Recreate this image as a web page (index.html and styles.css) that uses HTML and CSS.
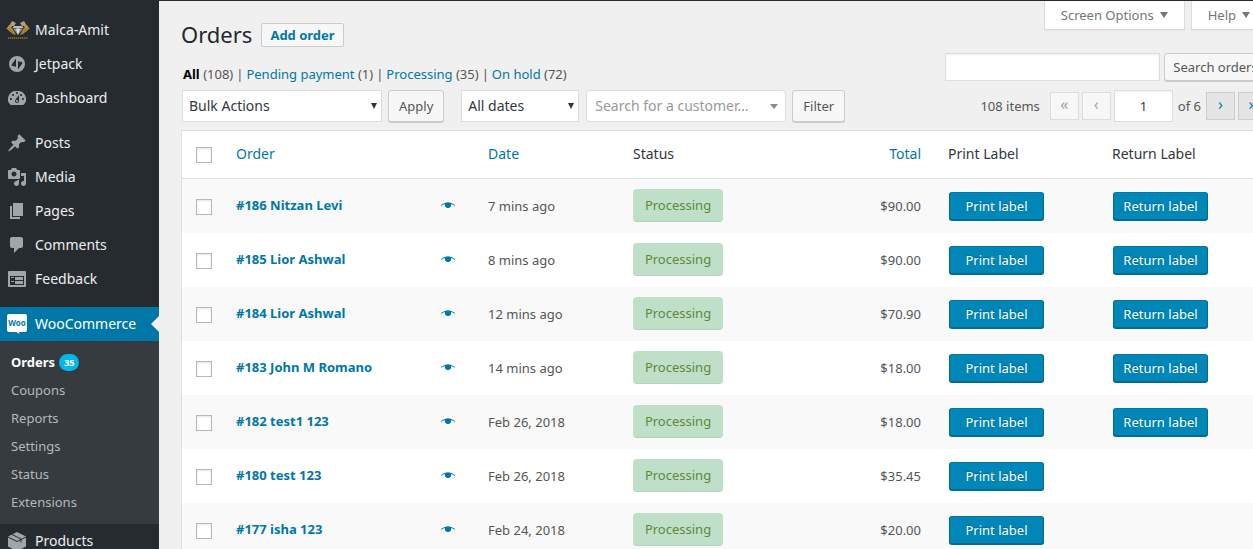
FILE: index.html
```html
<!DOCTYPE html>
<html lang="en">
<head>
<meta charset="utf-8">
<title>Orders</title>
<link rel="stylesheet" href="styles.css">
</head>
<body>
<div class="layout">
  <nav class="sidebar" aria-label="Main menu">
    <a class="item" href="#"><svg class="brand" viewBox="0 0 24 20" aria-hidden="true">
      <path fill="#aaa184" d="M6 1l4 2-2 3H3zM18 1l-4 2 2 3h5z"/><path fill="#b5953f" d="M3 5h4L5 8H1zM17 5h4l2 3h-4z"/><path fill="#a8842b" d="M0 8h6l2 3H3zM18 8h6l-3 3h-5zM3 11h5l2 4-3-1zM16 11h5l-4 3-3 1z"/>
      <path fill="#b9bdbf" d="M8 6h8l1.500 2h-11z"/><path fill="#8d9397" d="M7 8.500h10L12 15z"/><path fill="#dcdedf" d="M10 8.500h4L12 15z"/>
      <path stroke="#8b6d20" stroke-width="1.500" stroke-dasharray="1.500 .5" d="M2 18h20"/></svg>Malca-Amit</a>
    <a class="item" href="#"><svg viewBox="0 0 20 20" aria-hidden="true"><path fill-rule="evenodd" d="M10 2a8 8 0 1 1 0 16 8 8 0 0 1 0-16zM9 4.500L4.700 10.500q-.6 1.200.8 1.500L9 12.700zM11 7.300v8.200l4.300-6q.6-1.200-.8-1.500z"/></svg>Jetpack</a>
    <a class="item" href="#"><svg viewBox="0 0 20 20" aria-hidden="true"><path fill-rule="evenodd" d="M3.760 17h12.480A7.998 7.998 0 0 0 10 3a8 8 0 0 0-6.240 14zM10 4c.55 0 1 .45 1 1s-.45 1-1 1-1-.45-1-1 .45-1 1-1zM6 6c.55 0 1 .45 1 1s-.45 1-1 1-1-.45-1-1 .45-1 1-1zm8 0c.55 0 1 .45 1 1s-.45 1-1 1-1-.45-1-1 .45-1 1-1zm-5.370 5.550L12 7v6c0 1.100-.9 2-2 2s-2-.9-2-2c0-.57.24-1.080.63-1.450zM4 10c.55 0 1 .45 1 1s-.45 1-1 1-1-.45-1-1 .45-1 1-1zm12 0c.55 0 1 .45 1 1s-.45 1-1 1-1-.45-1-1 .45-1 1-1zm-5 3c0-.55-.45-1-1-1s-1 .45-1 1 .45 1 1 1 1-.45 1-1z"/></svg>Dashboard</a>
    <a class="item first" href="#"><svg viewBox="0 0 20 20" aria-hidden="true"><path d="M10.440 3.020l1.820-1.820 6.360 6.350-1.830 1.820c-1.050-.68-2.480-.57-3.410.36l-.75.75c-.92.93-1.040 2.350-.35 3.410l-1.830 1.820-2.410-2.410-2.800 2.790c-.42.42-3.380 2.710-3.800 2.290s1.860-3.390 2.280-3.810l2.790-2.790L4.100 9.360l1.830-1.820c1.050.69 2.480.57 3.400-.36l.75-.75c.93-.92 1.050-2.350.36-3.410z"/></svg>Posts</a>
    <a class="item" href="#"><svg viewBox="0 0 20 20" aria-hidden="true"><path fill-rule="evenodd" d="M13 11V4c0-.55-.45-1-1-1h-1.670L9 1H5L3.670 3H2c-.55 0-1 .45-1 1v7c0 .55.45 1 1 1h10c.55 0 1-.45 1-1zM7 4.500c1.380 0 2.500 1.120 2.500 2.500S8.380 9.500 7 9.500 4.500 8.380 4.500 7 5.620 4.500 7 4.500zM14 6h5v10.500c0 1.380-1.120 2.500-2.500 2.500S14 17.880 14 16.500s1.120-2.500 2.500-2.500c.17 0 .34.02.5.05V9h-3V6zm-4 8.050V13h2v3.500c0 1.380-1.120 2.500-2.500 2.500S7 17.880 7 16.500 8.120 14 9.500 14c.17 0 .34.02.5.05z"/></svg>Media</a>
    <a class="item" href="#"><svg viewBox="0 0 20 20" aria-hidden="true"><path d="M6 15V2h10v13H6zm-1 1h8v2H3V5h2v11z"/></svg>Pages</a>
    <a class="item" href="#"><svg viewBox="0 0 20 20" aria-hidden="true"><path d="M5 2h9c1.100 0 2 .9 2 2v7c0 1.100-.9 2-2 2h-2l-5 5v-5H5c-1.100 0-2-.9-2-2V4c0-1.100.9-2 2-2z"/></svg>Comments</a>
    <a class="item" href="#"><svg viewBox="0 0 20 20" aria-hidden="true"><path fill-rule="evenodd" d="M2 2h16c.55 0 1 .45 1 1v14c0 .55-.45 1-1 1H2c-.55 0-1-.45-1-1V3c0-.55.45-1 1-1zm15 14V7H3v9h14zM4 8v1h3V8H4zm4 0v3h8V8H8zm-4 4v1h3v-1H4zm4 0v3h8v-3H8z"/></svg>Feedback</a>
    <a class="item first current" href="#"><svg viewBox="0 0 20 20" aria-hidden="true"><path d="M2 0h16q2 0 2 2v14q0 2-2 2h-6l.5 2-3-2H2q-2 0-2-2V2q0-2 2-2z"/><text class="woo" x="10" y="12" text-anchor="middle">Woo</text></svg>WooCommerce</a>
    <div class="submenu">
      <a class="selected" href="#">Orders <span class="count">35</span></a>
      <a href="#">Coupons</a>
      <a href="#">Reports</a>
      <a href="#">Settings</a>
      <a href="#">Status</a>
      <a href="#">Extensions</a>
    </div>
    <a class="item" href="#"><svg viewBox="0 0 20 20" aria-hidden="true"><path d="M10 1l9 4.500v10L10 20l-9-4.500v-10z"/><path class="seam" d="M1 6l9 4.500L19 6M5 3.500L14 8v3.500"/></svg>Products</a>
  </nav>
  <main class="main">
    <header class="head">
      <h1>Orders</h1>
      <a class="add" href="#">Add order</a>
      <div class="tabs">
        <button type="button">Screen Options <i class="tri"></i></button>
        <button type="button">Help <i class="tri"></i></button>
      </div>
    </header>
    <div class="filters">
      <ul class="views">
        <li><a class="all" href="#">All</a> (108)</li>
        <li><a href="#">Pending payment</a> (1)</li>
        <li><a href="#">Processing</a> (35)</li>
        <li><a href="#">On hold</a> (72)</li>
      </ul>
      <form class="search">
        <input type="search" aria-label="Search orders">
        <button class="button" type="button">Search orders</button>
      </form>
    </div>
    <div class="tablenav">
      <span class="pick bulk"><select aria-label="Bulk actions"><option>Bulk Actions</option></select></span>
      <button class="button apply" type="button">Apply</button>
      <span class="pick dates"><select aria-label="Filter by date"><option>All dates</option></select></span>
      <span class="pick customer"><select aria-label="Customer"><option>Search for a customer…</option></select></span>
      <button class="button" type="button">Filter</button>
      <div class="pages">
        <span class="total-items">108 items</span>
        <button class="page" type="button" disabled aria-label="First page">«</button>
        <button class="page" type="button" disabled aria-label="Previous page">‹</button>
        <input type="text" value="1" aria-label="Current page">
        <span class="of">of 6</span>
        <button class="page" type="button" aria-label="Next page">›</button>
        <button class="page" type="button" aria-label="Last page">»</button>
      </div>
    </div>
    <table class="orders">
      <colgroup><col class="c-check"><col class="c-order"><col class="c-date"><col class="c-status"><col class="c-total"><col class="c-print"><col></colgroup>
      <thead>
        <tr><th><input type="checkbox" aria-label="Select all"></th><th><a href="#">Order</a></th><th><a href="#">Date</a></th><th>Status</th><th class="total"><a href="#">Total</a></th><th>Print Label</th><th>Return Label</th></tr>
      </thead>
      <tbody id="rows"></tbody>
    </table>
  </main>
</div>
<script src="orders.js"></script>
</body>
</html>
```
FILE: orders.js
```js
const orders = [
  ['#186 Nitzan Levi', '7 mins ago', '$90.00', true],
  ['#185 Lior Ashwal', '8 mins ago', '$90.00', true],
  ['#184 Lior Ashwal', '12 mins ago', '$70.90', true],
  ['#183 John M Romano', '14 mins ago', '$18.00', true],
  ['#182 test1 123', 'Feb 26, 2018', '$18.00', true],
  ['#180 test 123', 'Feb 26, 2018', '$35.45', false],
  ['#177 isha 123', 'Feb 24, 2018', '$20.00', false]
];
const eye = '<svg viewBox="0 0 14 7" aria-hidden="true"><path d="M0 3Q7-2.500 14 3l-.6.800Q11.500 2.300 10 1.800a3.200 3.200 0 1 1-6 0Q2.500 2.300.6 3.800z"/></svg>';
document.getElementById('rows').innerHTML = orders.map(([name, date, total, canReturn]) => `
  <tr>
    <td><input type="checkbox" aria-label="Select ${name}"></td>
    <td class="raised"><div class="order"><a href="#">${name}</a><button class="preview" type="button" aria-label="Preview">${eye}</button></div></td>
    <td>${date}</td>
    <td class="raised"><span class="status">Processing</span></td>
    <td class="total">${total}</td>
    <td><button class="primary" type="button">Print label</button></td>
    <td>${canReturn ? '<button class="primary" type="button">Return label</button>' : ''}</td>
  </tr>`).join('');
```
FILE: styles.css
```css
* { box-sizing: border-box; }
html, body { height: 100%; }
body {
  margin: 0;
  overflow: hidden;
  background: #f0f0f0;
  color: #555;
  font: 13px/18px "Noto Sans", "Open Sans", sans-serif;
}
a { color: #0077a7; text-decoration: none; }
button, input, select { font: inherit; margin: 0; }
.layout { display: flex; min-height: 100%; border-top: 1px solid #262b30; }

/* Sidebar */
.sidebar { flex: none; width: 159px; padding-top: 12px; background: #262b30; }
.item {
  display: flex;
  align-items: center;
  gap: 8px;
  height: 34px;
  padding-left: 7px;
  color: #eee;
  font-size: 14px;
}
.item svg { width: 20px; height: 20px; fill: #a0a5aa; overflow: visible; }
.item .brand { width: 24px; margin: 0 -3px 0 -1px; }
.first { margin-top: 11px; }
.current { position: relative; background: #0077a7; color: #fff; }
.current svg { fill: #fff; }
.current::after {
  content: "";
  position: absolute;
  right: 0;
  border: 8px solid transparent;
  border-left: 0;
  border-right-color: #f0f0f0;
}
.item .woo { fill: #0077a7; font-size: 8px; font-weight: 700; }
.seam { fill: none; stroke: #262b30; }
.submenu { padding: 7px 0 8px; background: #363b3f; }
.submenu a {
  display: flex;
  align-items: center;
  gap: 4px;
  height: 28px;
  padding-left: 11px;
  color: #b4b9be;
}
.submenu .selected { color: #fff; font-weight: 700; }
.count {
  padding: 0 5px;
  border-radius: 9px;
  background: #00b9eb;
  color: #fff;
  font-size: 9px;
  line-height: 17px;
}

/* Page head */
.main { flex: 1; min-width: 0; margin-right: -14px; padding-left: 22px; }
.head { display: flex; align-items: flex-start; height: 52px; }
h1 { margin: 17px 9px 0 0; color: #23282d; font-size: 22px; font-weight: 400; line-height: 32px; }
.add {
  margin-top: 22px;
  padding: 0 8px;
  border: 1px solid #ccc;
  border-radius: 2px;
  background: #f7f7f7;
  font-weight: 700;
  line-height: 22px;
}
.tabs { display: flex; gap: 6px; margin-left: auto; }
.tabs button {
  display: flex;
  align-items: center;
  gap: 6px;
  height: 29px;
  padding: 0 16px;
  border: 1px solid #ddd;
  border-top: 0;
  background: #fff;
  box-shadow: 0 1px 1px rgba(0, 0, 0, .04);
  color: #72777c;
}
.tri { border: 4px solid transparent; border-top: 6px solid #72777c; border-bottom: 0; }
.filters { display: flex; justify-content: space-between; height: 37px; }
.views { display: flex; margin: 12px 0 0 2px; padding: 0; list-style: none; }
.views li + li::before { content: "|"; margin: 0 3px; }
.views .all { color: #000; font-weight: 700; }
.search { display: flex; gap: 4px; height: 29px; }
input {
  border: 1px solid #ddd;
  background: #fff;
  box-shadow: inset 0 1px 2px rgba(0, 0, 0, .07);
  color: #32373c;
}
.search input { width: 215px; height: 28px; }
.button {
  padding: 0 10px;
  border: 1px solid #ccc;
  border-radius: 3px;
  background: #f7f7f7;
  box-shadow: 0 1px 0 #ccc;
  color: #555;
  white-space: nowrap;
}
.search .button { height: 28px; width: 103px; padding: 0; }

/* Controls above the table */
.tablenav { display: flex; height: 40px; }
.tablenav > .button { height: 32px; min-width: 53px; }
.pick { position: relative; height: 32px; }
.pick select {
  width: 100%;
  height: 100%;
  padding: 0 6px;
  border: 1px solid #ddd;
  border-radius: 0;
  background: #fff;
  color: #32373c;
  font-size: 14px;
  appearance: none;
}
.pick::after {
  content: "";
  position: absolute;
  top: 13px;
  right: 5px;
  border: 3px solid transparent;
  border-top: 6px solid #32373c;
  border-bottom: 0;
  pointer-events: none;
}
.bulk { width: 200px; margin: 0 6px 0 1px; }
.dates { width: 118px; margin: 0 7px 0 0; }
.customer { width: 200px; margin-right: 6px; }
.tablenav .apply { min-width: 56px; margin-right: 17px; }
.customer select { padding: 0 8px; border-radius: 4px; color: #999; }
.customer::after { top: 14px; right: 8px; border-width: 5px 4px 0; border-top-color: #888; }
.pages { display: flex; align-items: center; gap: 3px; height: 32px; margin-left: auto; }
.total-items { margin-right: 7px; }
.of { margin: 0 2px; }
.page {
  width: 29px;
  height: 28px;
  padding: 0 0 4px;
  border: 1px solid #ccc;
  background: #e5e5e5;
  color: #0077a7;
  font-size: 16px;
}
.page:disabled { border-color: #ddd; background: #f7f7f7; color: #a0a5aa; }
.pages input { width: 59px; height: 32px; text-align: center; }

/* Orders table */
.orders {
  width: 100%;
  border: 1px solid #e1e1e1;
  border-spacing: 0;
  background: #fff;
  table-layout: fixed;
}
.c-check { width: 44px; }
.c-order { width: 252px; }
.c-date { width: 145px; }
.c-status { width: 147px; }
.c-total { width: 168px; }
.c-print { width: 164px; }
th, td { padding: 0 10px; text-align: left; vertical-align: middle; }
th { height: 48px; padding-bottom: 2px; border-bottom: 1px solid #e1e1e1; color: #32373c; font-size: 14px; font-weight: 400; }
td { height: 54px; }
td.raised { padding-bottom: 2px; }
th:first-child { padding: 0 0 0 14px; }
td:first-child { padding: 2px 0 0 14px; }
.orders .total { padding-right: 17px; text-align: right; }
tbody tr:nth-child(odd) { background: #f9f9f9; }
.orders input {
  display: block;
  width: 16px;
  height: 16px;
  border: 1px solid #b4b9be;
  box-shadow: inset 0 1px 2px rgba(0, 0, 0, .1);
  appearance: none;
}
.order { display: flex; align-items: center; justify-content: space-between; padding-right: 13px; font-weight: 700; }
.preview { display: flex; padding: 0; border: 0; background: none; }
.preview svg { width: 14px; height: 7px; fill: #0077a7; }
.status {
  display: block;
  width: 90px;
  border-bottom: 1px solid #b4d4bd;
  border-radius: 4px;
  background: #c0dfc8;
  color: #5b8a3c;
  line-height: 32px;
  text-align: center;
}
.primary {
  display: block;
  width: 95px;
  height: 28px;
  margin-left: 1px;
  padding: 0;
  border: 1px solid #006c9a;
  border-top-color: #0077a7;
  border-radius: 3px;
  background: #0087b7;
  box-shadow: 0 1px 0 #006c9a;
  color: #fff;
  text-shadow: 0 -1px 1px #006c9a;
}
```
